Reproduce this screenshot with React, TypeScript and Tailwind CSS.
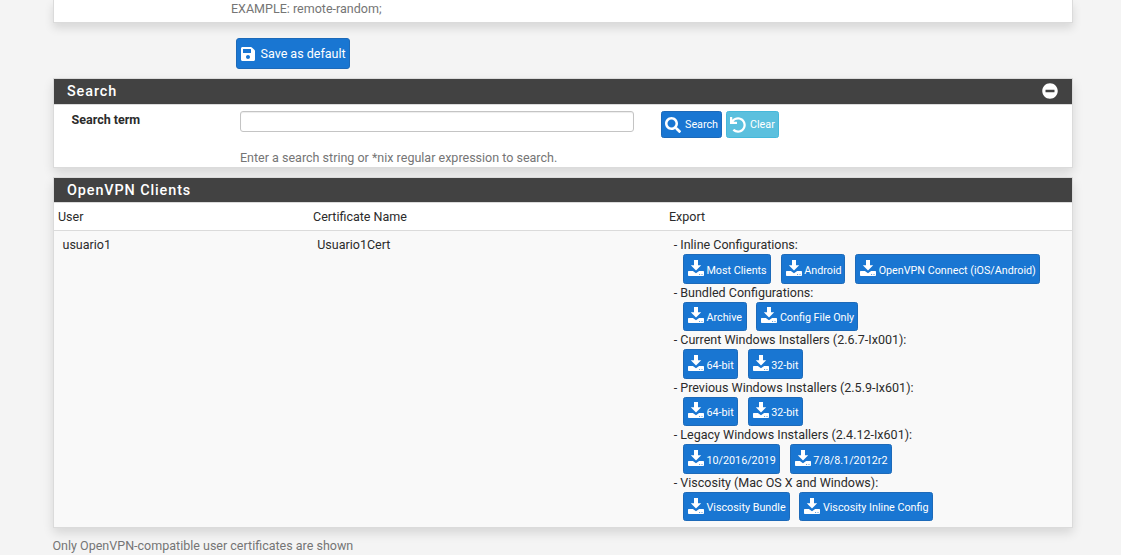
import React from "react";
import { FaMinusCircle, FaSave, FaSearch, FaUndo } from "react-icons/fa";

const groups = [
  { title: "Inline Configurations:", items: [["Most Clients", "w-[88px]"], ["Android", "w-[64.6px]"], ["OpenVPN Connect (iOS/Android)", "w-[185px]"]] },
  { title: "Bundled Configurations:", items: [["Archive", "w-[63.6px]"], ["Config File Only", "w-[102px]"]] },
  { title: "Current Windows Installers (2.6.7-Ix001):", items: [["64-bit", "w-[55px]"], ["32-bit", "w-[55px]"]] },
  { title: "Previous Windows Installers (2.5.9-Ix601):", items: [["64-bit", "w-[55px]"], ["32-bit", "w-[55px]"]] },
  { title: "Legacy Windows Installers (2.4.12-Ix601):", items: [["10/2016/2019", "w-[97px]"], ["7/8/8.1/2012r2", "w-[102px]"]] },
  { title: "Viscosity (Mac OS X and Windows):", items: [["Viscosity Bundle", "w-[106.6px]"], ["Viscosity Inline Config", "w-[134px]"]] },
];

const panel = "border border-[#dbdbdb] bg-white shadow-[0_5px_10px_rgba(0,0,0,0.12)]";
const heading = "flex items-center justify-between border-b border-[#dbdbdb] bg-[#424242] pl-[13px] pr-[14px] text-[14.4px] font-medium tracking-[0.9px] text-white";

function DownloadIcon() {
  return (
    <svg viewBox="0 0 16 16" fill="currentColor" className="mr-[2.5px] mb-[2px] size-[16px] shrink-0">
      <path d="M6 0h4v5.2h3.2L8 10.4 2.8 5.2H6z" />
      <path
        fillRule="evenodd"
        d="M.6 11h4.3L8 13.3 11.1 11h4.2q.7 0 .7.7v3.5q0 .8-.8.8H.8q-.8 0-.8-.8v-3.5q0-.7.6-.7zM11.1 14v.8h1V14zM13.5 14v.8h1V14z"
      />
    </svg>
  );
}

function ExportButton({ label, width }: { label: string; width: string }) {
  return (
    <button className={`flex h-[29.6px] shrink-0 items-center rounded-[2.5px] border border-[#1d6ab9] bg-[#1976d2] pl-[4px] text-[10.75px] whitespace-nowrap text-white ${width}`}>
      <DownloadIcon />
      <span className="pt-[3.6px]">{label}</span>
    </button>
  );
}

export default function App() {
  return (
    <div className="h-[555px] overflow-hidden bg-[#f4f4f4] pl-[53px] font-['Roboto',sans-serif] text-[12.53px] leading-[18px] text-[#2b2b2b]">
      <div className="w-[1020px]">
        <section className="h-[23px] border border-t-0 border-[#dbdbdb] bg-white pl-[177px] text-[#757575] shadow-[0_5px_10px_rgba(0,0,0,0.12)]">
          EXAMPLE: remote-random;
        </section>
        <button className="mt-[15px] ml-[183px] flex h-[31px] w-[114px] items-center rounded-[3px] border border-[#1d6ab9] bg-[#1976d2] pl-[3px] whitespace-nowrap text-white">
          <FaSave className="mr-[4.5px] size-[16px] shrink-0" />
          Save as default
        </button>
        <section className={`mt-[9px] h-[90px] ${panel}`}>
          <h2 className={`h-[26px] ${heading}`}>
            Search
            <FaMinusCircle className="mb-[2px] size-[16px]" />
          </h2>
          <div className="flex pt-[6px]">
            <label className="w-[186px] pl-[17.5px] font-bold">Search term</label>
            <div className="w-[394px]">
              <input className="block h-[21px] w-full rounded-[3px] border border-[#c4c4c4] bg-white shadow-[inset_0_1px_1px_rgba(0,0,0,0.075)]" />
              <p className="mt-[17px] text-[#757575]">Enter a search string or *nix regular expression to search.</p>
            </div>
            <div className="ml-[27px] flex gap-[4px] text-[10.75px] text-white">
              <button className="flex h-[27px] w-[61px] items-center rounded-[2.5px] border border-[#1d6ab9] bg-[#1976d2] pl-[3px]">
                <FaSearch className="mr-[4px] size-[16px]" />
                Search
              </button>
              <button className="flex h-[27px] w-[53px] items-center rounded-[2.5px] border border-[#46b8da] bg-[#5bc0de] pl-[3px]">
                <FaUndo className="mr-[4px] size-[16px]" />
                Clear
              </button>
            </div>
          </div>
        </section>
        <section className={`mt-[9px] h-[351px] ${panel}`}>
          <h2 className={`h-[25px] pt-[1px] ${heading}`}>OpenVPN Clients</h2>
          <div className="flex h-[28px] items-center border-b border-[#dbdbdb] pl-[4px]">
            <span className="w-[255px]">User</span>
            <span className="w-[356px]">Certificate Name</span>
            <span>Export</span>
          </div>
          <div className="flex h-[296px] bg-[#f9f9f9] pt-[5px] pl-[8.5px]">
            <span className="w-[254.7px]">usuario1</span>
            <span className="w-[356.5px]">Usuario1Cert</span>
            <div>
              {groups.map((group) => (
                <div key={group.title} className="h-[47.55px]">
                  <div className="h-[18px] whitespace-nowrap">- {group.title}</div>
                  <div className="ml-[9.3px] flex gap-[9.8px]">
                    {group.items.map(([label, width]) => (
                      <ExportButton key={label} label={label} width={width} />
                    ))}
                  </div>
                </div>
              ))}
            </div>
          </div>
        </section>
        <p className="mt-[9px] -ml-[0.5px] text-[#757575]">Only OpenVPN-compatible user certificates are shown</p>
      </div>
    </div>
  );
}
